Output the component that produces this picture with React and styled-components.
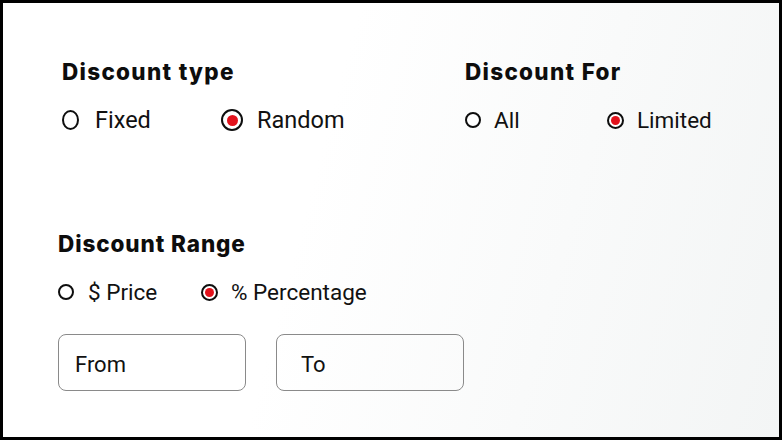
import React from "react";
import styled, { createGlobalStyle } from "styled-components";

const GlobalStyle = createGlobalStyle`
  html, body {
    margin: 0;
    padding: 0;
  }
  body {
    font-family: Roboto, "Liberation Sans", sans-serif;
    color: #111;
  }
`;

const Frame = styled.div`
  box-sizing: border-box;
  width: 782px;
  height: 440px;
  border: 3px solid #000;
  background: linear-gradient(105deg, #ffffff 40%, #f3f5f5 100%);
  padding-top: 56px;
  display: flex;
  flex-direction: column;
`;

const TopRow = styled.div`
  display: grid;
  grid-template-columns: 403px 1fr;
  padding-left: 59px;
`;

const Section = styled.div`
  display: flex;
  flex-direction: column;
  padding-left: ${(p) => p.$indent || 0}px;
  margin-top: ${(p) => p.$top || 0}px;
`;

const Heading = styled.h2`
  margin: 0;
  font-family: Inter, "Noto Sans", sans-serif;
  font-weight: 800;
  font-size: ${(p) => p.$size || 22.5}px;
  line-height: 26px;
  letter-spacing: ${(p) => p.$track ?? 1.3}px;
  color: #0d0d0d;
`;

const RadioRow = styled.div`
  display: flex;
  align-items: center;
  margin-top: 22px;
`;

const Option = styled.label`
  display: flex;
  align-items: center;
  width: ${(p) => p.$width}px;
  font-size: ${(p) => p.$size || 23.5}px;
  line-height: 26px;
  color: #111;
  cursor: pointer;
`;

const Dot = styled.span`
  box-sizing: border-box;
  flex: none;
  width: ${(p) => p.$w}px;
  height: ${(p) => p.$h}px;
  border: 2px solid #0e0e0e;
  border-radius: 50%;
  background: #fff;
  margin-right: ${(p) => p.$gap}px;
  display: flex;
  align-items: center;
  justify-content: center;

  &::after {
    content: "";
    display: ${(p) => (p.$checked ? "block" : "none")};
    width: ${(p) => Math.round(p.$w * 0.5)}px;
    height: ${(p) => Math.round(p.$w * 0.5)}px;
    border-radius: 50%;
    background: #e2121c;
  }
`;

const Inputs = styled.div`
  display: flex;
  gap: 30px;
  margin-top: 29px;
`;

const Field = styled.input`
  box-sizing: border-box;
  width: 188px;
  height: 57px;
  border: 1px solid #8a8a8a;
  border-radius: 8px;
  background: transparent;
  padding: 3px 0 0 ${(p) => p.$pad}px;
  font-family: Roboto, "Liberation Sans", sans-serif;
  font-size: 22px;
  color: #111;
  outline: none;

  &::placeholder {
    color: #111;
    opacity: 1;
  }
`;

function Radio({ label, checked, width, w, h, gap, size }) {
  return (
    <Option $width={width} $size={size}>
      <Dot $checked={checked} $w={w} $h={h} $gap={gap} />
      {label}
    </Option>
  );
}

export default function App() {
  return (
    <>
      <GlobalStyle />
      <Frame>
        <TopRow>
          <Section $indent={0}>
            <Heading>Discount type</Heading>
            <RadioRow>
              <Radio label="Fixed" width={159} w={17} h={20} gap={16} />
              <Radio label="Random" checked width={130} w={22} h={22} gap={14} />
            </RadioRow>
          </Section>
          <Section>
            <Heading>Discount For</Heading>
            <RadioRow>
              <Radio label="All" width={142} w={16} h={16} gap={13} size={22.5} />
              <Radio label="Limited" checked width={130} w={17} h={17} gap={13} size={22.5} />
            </RadioRow>
          </Section>
        </TopRow>

        <Section $indent={55} $top={98}>
          <Heading $track={0.9}>Discount Range</Heading>
          <RadioRow>
            <Radio label="$ Price" width={143} w={16} h={16} gap={14} size={22.5} />
            <Radio label="% Percentage" checked width={200} w={17} h={17} gap={13} size={22.5} />
          </RadioRow>
          <Inputs>
            <Field placeholder="From" $pad={16} />
            <Field placeholder="To" $pad={24} />
          </Inputs>
        </Section>
      </Frame>
    </>
  );
}
